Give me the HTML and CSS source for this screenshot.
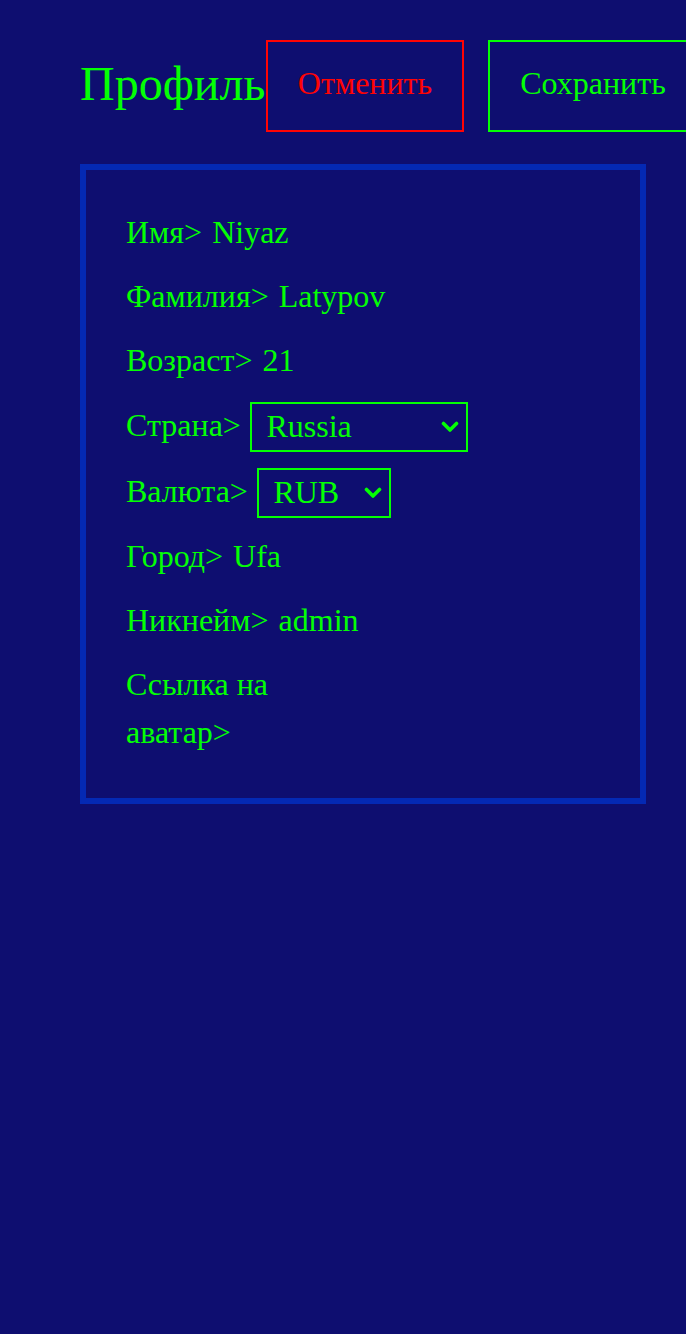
FILE: index.html
```html
<!DOCTYPE html>
<html lang="ru">
<head>
<meta charset="utf-8">
<title>Профиль</title>
<link rel="stylesheet" href="styles.css">
</head>
<body>
<div class="page">
  <div class="header">
    <div class="title">Профиль</div>
    <button class="btn btn-red">Отменить</button>
    <button class="btn btn-green">Сохранить</button>
  </div>
  <div class="card">
    <div class="row"><span class="label">Имя&gt;</span><input class="input" value="Niyaz"></div>
    <div class="row"><span class="label">Фамилия&gt;</span><input class="input" value="Latypov"></div>
    <div class="row"><span class="label">Возраст&gt;</span><input class="input" value="21"></div>
    <div class="row">
      <span class="label">Страна&gt;</span>
      <span class="select-wrap">
        <select class="select select-country"><option>Russia</option></select>
        <svg class="chevron" width="18" height="12" viewBox="0 0 18 12"><polyline points="2.5,2.5 9,9 15.5,2.5" fill="none" stroke="#04ff04" stroke-width="3.6" stroke-linecap="round" stroke-linejoin="round"/></svg>
      </span>
    </div>
    <div class="row">
      <span class="label">Валюта&gt;</span>
      <span class="select-wrap">
        <select class="select select-currency"><option>RUB</option></select>
        <svg class="chevron" width="18" height="12" viewBox="0 0 18 12"><polyline points="2.5,2.5 9,9 15.5,2.5" fill="none" stroke="#04ff04" stroke-width="3.6" stroke-linecap="round" stroke-linejoin="round"/></svg>
      </span>
    </div>
    <div class="row"><span class="label">Город&gt;</span><input class="input" value="Ufa"></div>
    <div class="row"><span class="label">Никнейм&gt;</span><input class="input" value="admin"></div>
    <div class="row"><span class="label">Ссылка на аватар&gt;</span><input class="input input-wide" value=""></div>
  </div>
</div>
</body>
</html>
```

FILE: styles.css
```css
html, body {
  margin: 0;
  padding: 0;
  background: #0e0e70;
}
body {
  font-family: "Liberation Serif", "Times New Roman", serif;
  color: #04ff04;
  width: 686px;
  height: 1334px;
  overflow: hidden;
}
.page {
  padding: 40px 0 0 80px;
}
.header {
  display: flex;
  align-items: center;
  gap: 24px;
  height: 92px;
}
.title {
  font-size: 48px;
  margin-right: -23.5px;
  line-height: 1;
  padding-bottom: 4px;
}
.btn {
  flex-shrink: 0;
  height: 92px;
  background: transparent;
  font-family: "Liberation Serif", "Times New Roman", serif;
  font-size: 32px;
  padding: 0 30px 6px;
  border: 2px solid;
}
.btn-red {
  color: #ff0404;
  border-color: #ff0404;
}
.btn-green {
  color: #04ff04;
  border-color: #04ff04;
}
.card {
  margin-top: 32px;
  border: 6px solid #0429b4;
  padding: 38px 40px 42px;
  box-sizing: content-box;
  display: flex;
  flex-direction: column;
  gap: 16px;
  width: 474px;
}
.row {
  display: flex;
  align-items: center;
  gap: 10px;
  min-height: 48px;
  font-size: 32px;
  line-height: 48px;
}
.label {
  flex-shrink: 1;
}
.input {
  flex: 1 1 0;
  min-width: 0;
  background: transparent;
  border: none;
  outline: none;
  padding: 0;
  font-family: inherit;
  font-size: 32px;
  color: #04ff04;
}
.input-wide {
  flex: 0 0 300px;
}
.select-wrap {
  position: relative;
  display: inline-flex;
  margin: 2px 0 -2px -0.5px;
}
.select {
  -webkit-appearance: none;
  appearance: none;
  height: 50px;
  box-sizing: border-box;
  background: transparent;
  border: 2px solid #04ff04;
  color: #04ff04;
  font-family: inherit;
  font-size: 32px;
  line-height: 44px;
  padding: 0 30px 2px 14px;
  border-radius: 0;
  outline: none;
}
.select-country {
  width: 218px;
}
.select-currency {
  width: 134px;
}
.select option {
  background: #0e0e70;
}
.chevron {
  position: absolute;
  right: 9px;
  top: 19px;
  pointer-events: none;
}
```
